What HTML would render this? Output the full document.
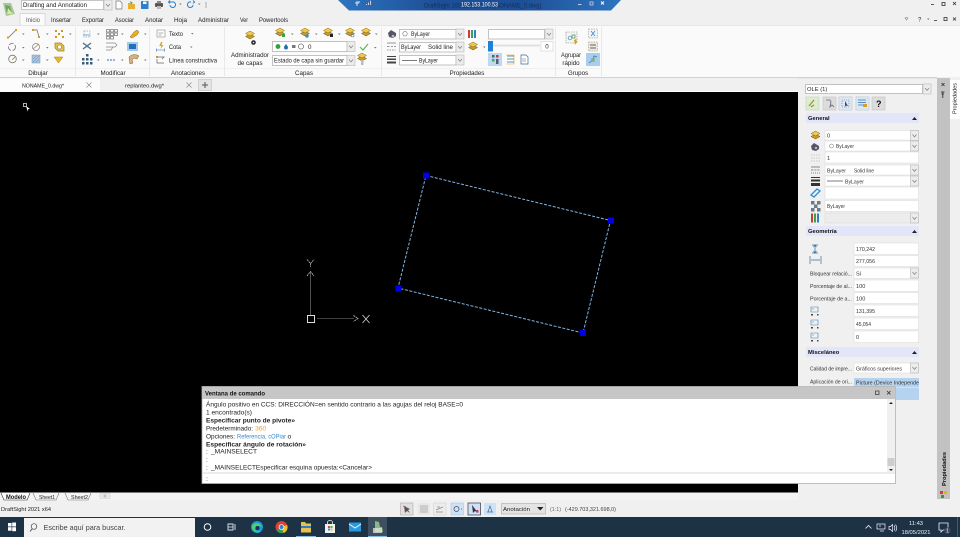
<!DOCTYPE html>
<html lang="es"><head><meta charset="utf-8"><title>DraftSight</title>
<style>
html,body{margin:0;padding:0;background:#000;overflow:hidden;width:960px;height:537px}
svg{display:block;position:absolute;left:0;top:0;filter:blur(.28px)}
text{font-family:"Liberation Sans",sans-serif;font-size:6.2px;fill:#222}
.b{font-weight:bold;fill:#111}
.c{text-anchor:middle}
.cmd{font-size:6.8px;fill:#222}
.p{font-size:5.6px;fill:#333}
.box{fill:#fff;stroke:#b4b4b4;stroke-width:.8}
.t{fill:#eee}
</style></head><body>
<svg width="960" height="537" viewBox="0 0 960 537" xmlns="http://www.w3.org/2000/svg">
<defs>
<g id="chev"><rect x="0" y="0" width="8" height="10" fill="#ececec" stroke="#b8b8b8" stroke-width=".6"/><path d="M2 4l2 2.4L6 4" fill="none" stroke="#888" stroke-width=".8"/></g>
<path id="dd" d="M0 0h2.6L1.3 1.5z" fill="#777"/>
<g id="layer"><path d="M-4.500 1.500l4.500-2.500 4.500 2.500-4.500 2.500z" fill="#c89a28" stroke="#6a5410" stroke-width=".5"/><path d="M-4.500-1.500l4.500-2.500 4.500 2.500-4.500 2.500z" fill="#eec850" stroke="#8a6c10" stroke-width=".5"/></g>
<g id="rowi"><rect x="0" y="0" width="13" height="13" fill="#dcdcdc" stroke="#c4c4c4" stroke-width=".6"/></g>
</defs>

<!-- base -->
<rect width="960" height="537" fill="#f0f0f0"/>
<!-- title / tabs -->
<rect y="0" width="960" height="25" fill="#f0f0f0"/>
<path d="M3 3l8 0 4 11-9 2z" fill="#a8c890"/><path d="M5 5l5 1 2 7-5 1z" fill="#6aa36a"/><path d="M8 8l5 6H7z" fill="#dce4a8"/>
<rect x="21.500" y=".5" width="82" height="9" fill="#fff" stroke="#b0b0b0" stroke-width=".7"/>
<text x="23" y="7" style="font-size:6.3px" textLength="64" lengthAdjust="spacingAndGlyphs">Drafting and Annotation</text>
<use href="#chev" x="104" y="0"/>
<!-- quick access -->
<path d="M116 1h4l2 2v6h-6z" fill="#fff" stroke="#777" stroke-width=".7"/>
<path d="M128 3h3l1 1h3v5h-7z" fill="#e8b030"/><path d="M130 1l3 2-2 1z" fill="#40a040"/>
<rect x="141" y="1" width="7.500" height="8" rx=".8" fill="#2c80d0"/><rect x="143" y="1.500" width="3.500" height="2.500" fill="#fff"/>
<rect x="155" y="3" width="8" height="4" rx="1" fill="#555"/><rect x="157" y="1" width="4" height="2.500" fill="#888"/><rect x="157" y="6" width="4" height="3" fill="#bbb"/>
<path d="M170 5a2.800 2.800 0 1 0 2-3h-3M170 .5l-1.500 1.500 1.500 1.500" fill="none" stroke="#2c80d0" stroke-width="1"/>
<use href="#dd" x="179" y="3.500"/>
<path d="M193 5a2.800 2.800 0 1 1-2-3h-1M193 .5l1.500 1.500-1.500 1.500" fill="none" stroke="#2c80d0" stroke-width="1"/>
<use href="#dd" x="198" y="3.500"/>
<path d="M205 3h2M205 5h2M205 7h2" stroke="#666" stroke-width=".6"/>

<!-- tab strip -->
<path d="M20 25V13.500h25V25" fill="#fafafa" stroke="#d0d0d0" stroke-width=".7"/>
<text x="26" y="22" style="font-size:6.200px;fill:#555" textLength="14" lengthAdjust="spacingAndGlyphs">Inicio</text>
<text x="51" y="22" textLength="20" lengthAdjust="spacingAndGlyphs">Insertar</text>
<text x="82" y="22" textLength="22" lengthAdjust="spacingAndGlyphs">Exportar</text>
<text x="115" y="22" textLength="19" lengthAdjust="spacingAndGlyphs">Asociar</text>
<text x="145" y="22" textLength="18" lengthAdjust="spacingAndGlyphs">Anotar</text>
<text x="174" y="22" textLength="13" lengthAdjust="spacingAndGlyphs">Hoja</text>
<text x="198" y="22" textLength="31" lengthAdjust="spacingAndGlyphs">Administrar</text>
<text x="240" y="22" textLength="8" lengthAdjust="spacingAndGlyphs">Ver</text>
<text x="259" y="22" textLength="29" lengthAdjust="spacingAndGlyphs">Powertools</text>

<!-- window controls -->
<g fill="none" stroke="#333" stroke-width=".8">
<path d="M931 4.500h3"/><rect x="942" y="2.500" width="3" height="3"/><path d="M953 2l3 3M956 2l-3 3"/>
<path d="M934 20.500h3"/><rect x="944" y="17.500" width="3" height="3"/><path d="M953 17.500l3 3M956 17.500l-3 3"/>
<path d="M905 18l1.500 2 1.500-2-1.500-.6z" stroke="#999"/>
</g>
<text x="918" y="21.500" style="font-size:6px">?</text>
<use href="#dd" x="927" y="18.500"/>

<!-- ribbon -->
<rect y="25" width="960" height="52" fill="#fafafa"/>
<rect y="25" width="960" height=".7" fill="#dedede"/>
<rect y="68" width="601" height=".7" fill="#ececec"/>
<g fill="#e2e2e2"><rect x="75" y="27" width=".7" height="49"/><rect x="149" y="27" width=".7" height="49"/><rect x="224" y="27" width=".7" height="49"/><rect x="381" y="27" width=".7" height="49"/><rect x="555" y="27" width=".7" height="49"/><rect x="601" y="27" width=".7" height="49"/></g>
<text class="c" x="38" y="75">Dibujar</text>
<text class="c" x="113" y="75">Modificar</text>
<text class="c" x="188" y="75">Anotaciones</text>
<text class="c" x="304" y="75">Capas</text>
<text class="c" x="467" y="75">Propiedades</text>
<text class="c" x="578" y="75">Grupos</text>

<!-- Dibujar icons -->
<path d="M8 38l8-8" stroke="#888" stroke-width=".9"/><rect x="7" y="36.500" width="2" height="2" fill="#d8a020"/><rect x="15" y="29" width="2" height="2" fill="#d8a020"/>
<path d="M33 30h4l2 7" fill="none" stroke="#888" stroke-width=".9"/><rect x="32" y="29" width="2" height="2" fill="#d8a020"/><rect x="38" y="36" width="2" height="2" fill="#d8a020"/>
<g fill="#c89820"><rect x="55" y="30" width="2" height="2"/><rect x="61" y="30" width="2" height="2"/><rect x="58" y="33" width="2" height="2"/><rect x="55" y="36" width="2" height="2"/><rect x="62" y="36" width="2" height="2"/></g>
<circle cx="12" cy="47" r="3.500" fill="none" stroke="#777" stroke-width=".8" stroke-dasharray="5 1.500"/>
<circle cx="36" cy="47" r="3.500" fill="none" stroke="#888" stroke-width=".8"/><path d="M33 49l6-5" stroke="#b07850" stroke-width=".7"/>
<path d="M55 43h6l3 3v5h-6l-3-3z" fill="#e8c040" stroke="#a08020" stroke-width=".7"/><circle cx="59.500" cy="47" r="2" fill="#fafafa" stroke="#777" stroke-width=".6"/>
<circle cx="12.500" cy="59" r="3.800" fill="none" stroke="#777" stroke-width=".8"/><path d="M12 60l3-3" stroke="#c89820" stroke-width="1"/>
<rect x="32" y="55" width="8" height="8" fill="#a8c4e0" stroke="#7090b0" stroke-width=".5"/><path d="M33 62l6-6M33 59l3-3M36 62l3-3" stroke="#6888a8" stroke-width=".5"/>
<path d="M54 57h9l-4.500 6z" fill="#e8b820" stroke="#a08020" stroke-width=".5"/>
<g><use href="#dd" x="22" y="33.500"/><use href="#dd" x="46" y="33.500"/><use href="#dd" x="69" y="33.500"/><use href="#dd" x="22" y="47"/><use href="#dd" x="46" y="47"/><use href="#dd" x="22" y="59.500"/><use href="#dd" x="46" y="59.500"/></g>

<!-- Modificar icons -->
<rect x="84" y="31" width="6" height="6" fill="none" stroke="#88a8c8" stroke-width=".7" stroke-dasharray="1.500 1"/><path d="M83 35h7" stroke="#4080c0" stroke-width=".7"/>
<g fill="none" stroke="#777" stroke-width=".7"><rect x="106.500" y="29.500" width="3" height="2.500"/><rect x="110.500" y="29.500" width="3" height="2.500"/><rect x="114.500" y="29.500" width="3" height="2.500"/><rect x="106.500" y="33" width="3" height="2.500"/><rect x="110.500" y="33" width="3" height="2.500"/><rect x="114.500" y="33" width="3" height="2.500"/><rect x="106.500" y="36.500" width="3" height="2.500"/><rect x="110.500" y="36.500" width="3" height="2.500"/></g>
<path d="M130 37l4-5 3-2 2 2-2 3-5 3z" fill="#e8b020" stroke="#906810" stroke-width=".5"/>
<path d="M83 43l8 6M91 43l-8 6" stroke="#5a6a78" stroke-width="1.300"/><circle cx="87" cy="46" r="1.300" fill="#4080c0"/>
<path d="M106 43h9l2 2-2 2h-9M106 47h7l-2 3h-5" fill="none" stroke="#888" stroke-width=".7"/>
<rect x="127" y="42" width="11" height="9" fill="#a8c8e8"/><rect x="129" y="44" width="7" height="5" fill="#2070c0"/>
<g fill="#3a5a78"><rect x="86" y="54" width="2.500" height="2.500"/><rect x="82" y="58" width="2.500" height="2.500"/><rect x="86" y="58" width="2.500" height="2.500"/><rect x="90" y="58" width="2.500" height="2.500"/><rect x="82" y="62" width="2.500" height="2.500"/><rect x="86" y="62" width="2.500" height="2.500"/><rect x="90" y="62" width="2.500" height="2.500"/></g>
<path d="M107 60h8" stroke="#3070c0" stroke-width=".9" stroke-dasharray="2 1"/>
<path d="M129 57c3-3 7-3 10-1l-2 3-3-1-2 2 1 3-3 1z" fill="#d8b080" stroke="#806020" stroke-width=".5"/>
<g><use href="#dd" x="97" y="33.500"/><use href="#dd" x="121" y="33.500"/><use href="#dd" x="144" y="33.500"/><use href="#dd" x="97" y="59.500"/><use href="#dd" x="121" y="59.500"/><use href="#dd" x="144" y="59.500"/></g>

<!-- Anotaciones -->
<rect x="157" y="30" width="8" height="7" fill="#fff" stroke="#888" stroke-width=".6"/><path d="M158.500 33h5M158.500 35h3" stroke="#666" stroke-width=".5"/>
<text x="169" y="36" textLength="14" lengthAdjust="spacingAndGlyphs">Texto</text><use href="#dd" x="191" y="33"/>
<path d="M161 42l1.500 0-1 3h2l-3 4 .7-3h-2z" fill="#e0a820"/><path d="M156.500 50h8M156.500 48.500v3M164.500 48.500v3" stroke="#3070b0" stroke-width=".6"/>
<text x="169" y="49" textLength="12" lengthAdjust="spacingAndGlyphs">Cota</text><use href="#dd" x="190" y="46.500"/>
<path d="M157 57h7l-2 2M157 59v4h7" fill="none" stroke="#666" stroke-width=".7"/><rect x="156" y="56" width="2" height="2" fill="#c89820"/>
<text x="169" y="62.500" textLength="48" lengthAdjust="spacingAndGlyphs">Línea constructiva</text>

<!-- Capas -->
<use href="#layer" x="250" y="35"/>
<circle cx="253.500" cy="42.500" r="2.300" fill="#222"/><circle cx="253.500" cy="42.500" r=".8" fill="#eee"/>
<text class="c" x="250" y="57" textLength="38" lengthAdjust="spacingAndGlyphs">Administrador</text>
<text class="c" x="250" y="65">de capas</text>
<g><use href="#layer" x="280" y="32"/><use href="#layer" x="305" y="32"/><use href="#layer" x="328" y="32"/><use href="#layer" x="350" y="32"/><use href="#layer" x="366" y="32"/></g>
<rect x="282" y="34" width="3" height="3" fill="#40a040"/><circle cx="307" cy="36" r="1.700" fill="#3090d0"/><rect x="330" y="34" width="3" height="3" fill="#222"/><circle cx="352.500" cy="35.500" r="1.500" fill="none" stroke="#4080c0" stroke-width=".6"/>
<g><use href="#dd" x="291" y="33.500"/><use href="#dd" x="315" y="33.500"/><use href="#dd" x="338" y="33.500"/><use href="#dd" x="375" y="33.500"/><use href="#dd" x="374" y="47"/></g>
<rect class="box" x="272.500" y="41.500" width="74.500" height="10"/>
<circle cx="278" cy="46.500" r="2.400" fill="#30a040"/><path d="M286 44c1.500 2 2 2.500 2 3.500a2 2 0 0 1-4 0c0-1 .5-1.500 2-3.500z" fill="#1f70b0"/><rect x="292" y="45" width="3.500" height="3" fill="#777"/><circle cx="301" cy="46.500" r="2.600" fill="#fff" stroke="#555" stroke-width=".6"/><text x="308" y="49">0</text>
<use href="#chev" x="347" y="41.500"/>
<rect class="box" x="272.500" y="55.500" width="74.500" height="10"/>
<text x="274" y="62.500" textLength="70" lengthAdjust="spacingAndGlyphs">Estado de capa sin guardar</text>
<use href="#chev" x="347" y="55.500"/>
<path d="M360 47l3 3 5-6" fill="none" stroke="#60b850" stroke-width="1.200"/>
<use href="#layer" x="362" y="57"/><rect x="361" y="60" width="2.500" height="5" fill="#bbb"/>

<!-- Propiedades -->
<path d="M388 33l3-3 5 3v3l-3 2-4-1z" fill="#556"/><circle cx="393" cy="36" r="1.300" fill="#bbb"/>
<g fill="none" stroke="#777" stroke-width=".7"><path d="M387 43h9M387 46.500h2.500m1.500 0h2m1 0h2M387 50h1.500m1 0h1.500m1 0h1.500m1 0h1"/></g>
<g fill="#444"><rect x="387" y="56" width="9" height="1"/><rect x="387" y="58.500" width="9" height="1.500"/><rect x="387" y="61.500" width="9" height="2"/></g>
<rect class="box" x="399.500" y="29.500" width="56.500" height="9.500"/>
<circle cx="405" cy="33.800" r="2.200" fill="#fff" stroke="#777" stroke-width=".6"/>
<text x="411" y="36.200" textLength="19" lengthAdjust="spacingAndGlyphs">ByLayer</text><use href="#chev" x="456" y="29"/>
<rect class="box" x="399.500" y="42.500" width="56.500" height="9.500"/>
<text x="401" y="49.200" textLength="20" lengthAdjust="spacingAndGlyphs">ByLayer</text><text x="428" y="49.200" textLength="25" lengthAdjust="spacingAndGlyphs">Solid line</text><use href="#chev" x="456" y="42"/>
<rect class="box" x="399.500" y="55.500" width="56.500" height="9.500"/>
<path d="M402 60.500h15" stroke="#444" stroke-width=".7"/><text x="419" y="62.400" textLength="19" lengthAdjust="spacingAndGlyphs">ByLayer</text><use href="#chev" x="456" y="55"/>
<rect x="468" y="30" width="2" height="8" fill="#c84030"/><rect x="471" y="30" width="2" height="8" fill="#40a050"/><rect x="474" y="30" width="2" height="8" fill="#3080c8"/>
<use href="#layer" x="473" y="46"/><use href="#dd" x="483" y="46.500"/>
<rect class="box" x="488.500" y="29.500" width="56" height="9.500"/><use href="#chev" x="545" y="29"/>
<rect x="488" y="44.500" width="52" height="2" fill="#e0e0e0"/>
<rect x="488" y="41" width="5" height="10.500" fill="#1f80d8"/>
<rect class="box" x="541" y="41.500" width="12" height="9.500" style="stroke:#ddd"/><text class="c" x="547" y="48.500">0</text>
<rect x="488" y="53" width="14" height="13" fill="#bcd8f2"/>
<rect x="492" y="55" width="2.500" height="2.500" fill="#506070"/><rect x="496" y="55" width="2.500" height="2.500" fill="#c04040"/><rect x="492" y="59" width="2.500" height="2.500" fill="#50a050"/><rect x="496" y="59" width="2.500" height="5" fill="#506070"/>
<path d="M506 55h8v9h-8" fill="none" stroke="#e0a820" stroke-width=".6"/><path d="M507 56h7M507 59h7M507 62h7" stroke="#3070a0" stroke-width=".7"/>
<path d="M521 55h5l2 2v7h-7z" fill="#fff" stroke="#3a6a90" stroke-width=".7"/><path d="M522 59h4M522 61h4" stroke="#3a6a90" stroke-width=".5"/>

<!-- Grupos -->
<rect x="566" y="32" width="11" height="11" fill="#f4f4f4" stroke="#888" stroke-width=".6" stroke-dasharray="1.500 1"/><circle cx="570" cy="38" r="1.800" fill="none" stroke="#3090c0" stroke-width=".7"/><rect x="572" y="35" width="3" height="3" fill="none" stroke="#409040" stroke-width=".7"/>
<path d="M574 40l2-1 1 3-2 3z" fill="#d8a020"/>
<text class="c" x="571" y="57" textLength="20" lengthAdjust="spacingAndGlyphs">Agrupar</text>
<text class="c" x="571" y="65">rápido</text>
<rect x="588.500" y="29" width="9" height="9" fill="#eef4f8" stroke="#888" stroke-width=".5" stroke-dasharray="1.500 1"/><path d="M591 31l4 5M595 31l-4 5" stroke="#3a80c0" stroke-width=".7"/>
<rect x="588.500" y="42" width="9" height="9" fill="#f0e8d8" stroke="#888" stroke-width=".5" stroke-dasharray="1.500 1"/><path d="M590 45h6M590 48h6" stroke="#506878" stroke-width=".9"/>
<rect x="586" y="53" width="14" height="13" fill="#a8cdf0"/><path d="M589 63l4-3 1-4 3 1" fill="none" stroke="#4a8aa0" stroke-width="1"/><rect x="591" y="58" width="4" height="4" fill="#80b080" opacity=".7"/>

<!-- doc tabs -->
<rect y="77" width="800" height="1.300" fill="#d2d2d2"/>
<rect y="78" width="800" height="14" fill="#f0f0f0"/>
<rect y="91" width="800" height="1" fill="#fcfcfc"/>
<rect x="0" y="78.300" width="100" height="14" fill="#fcfcfc"/>
<text x="22" y="87.500" style="font-size:5.500px" textLength="42" lengthAdjust="spacingAndGlyphs">NONAME_0.dwg*</text>
<text x="125" y="87.500" style="font-size:5.500px" textLength="39" lengthAdjust="spacingAndGlyphs">replanteo.dwg*</text>
<path d="M86.500 82.500l5 5M91.500 82.500l-5 5M186.500 82.500l5 5M191.500 82.500l-5 5" stroke="#888" stroke-width=".7"/>
<rect x="198.500" y="79.500" width="13" height="11" fill="#e4e4e4" stroke="#c8c8c8" stroke-width=".7"/><path d="M205 82v6M202 85h6" stroke="#555" stroke-width="1"/>

<!-- canvas -->
<rect x="0" y="92" width="798" height="400.500" fill="#000"/>
<rect x="23.500" y="103.500" width="3" height="3" fill="none" stroke="#ddd" stroke-width=".8"/><path d="M26 106l4 3-2 .2-.2 2.500z" fill="#fff"/>
<!-- selected rect -->
<path d="M426 175.500L610.500 220.500L583 333L398 288Z" fill="none" stroke="#7fb4e4" stroke-width="1" stroke-dasharray="3 1.500"/>
<g fill="#0000e6"><rect x="423" y="172.500" width="6" height="6"/><rect x="608" y="217.500" width="6" height="6"/><rect x="580" y="330" width="6" height="6"/><rect x="395.500" y="285.500" width="6" height="6"/></g>
<!-- UCS -->
<path d="M310.500 315V272" stroke="#666" stroke-width=".8"/>
<path d="M317 318.500H354" stroke="#555" stroke-width=".8"/>
<rect x="307.500" y="315.500" width="7" height="7" fill="none" stroke="#ddd" stroke-width="1"/>
<path d="M307 276l3.500-4.500 3.500 4.500" fill="none" stroke="#bbb" stroke-width=".8" stroke-dasharray="2 .6"/>
<path d="M307 259.500l3.500 4 3.500-4M310.500 263.500v3.500" fill="none" stroke="#bbb" stroke-width=".8" stroke-dasharray="2 .6"/>
<path d="M353.500 315.500l4.500 3-4.500 3" fill="none" stroke="#bbb" stroke-width=".8" stroke-dasharray="2 .6"/>
<path d="M362.500 315l7 8M369.500 315l-7 8" stroke="#ccc" stroke-width=".9"/>

<!-- right panel -->
<rect x="798" y="78" width="162" height="439" fill="#f0f0f0"/>
<rect x="798" y="77" width="139" height="1.300" fill="#d2d2d2"/>
<rect x="937" y="78" width="13" height="421" fill="#c2c2c2"/>
<rect x="950" y="80" width="10" height="39" fill="#fff"/>
<path d="M941.500 83l3 3M944.500 83l-3 3" stroke="#333" stroke-width=".8"/>
<path d="M941 92h3.500M942.750 92v6M941.500 94h2.500" stroke="#444" stroke-width="1"/>
<text transform="translate(956.500,114) rotate(-90)" style="font-size:5.800px" textLength="31" lengthAdjust="spacingAndGlyphs">Propiedades</text>
<text class="b" transform="translate(946,486) rotate(-90)" style="font-size:5.800px" textLength="34" lengthAdjust="spacingAndGlyphs">Propiedades</text>
<rect x="940" y="491" width="3" height="3" fill="#d04030"/><rect x="944" y="491" width="3" height="3" fill="#e0b020"/><rect x="941" y="495" width="3" height="3" fill="#409040"/>

<rect class="box" x="805.500" y="84.500" width="117" height="9"/><text x="807" y="91.200" style="font-size:5.800px">OLE (1)</text><use href="#chev" x="923" y="84"/>
<rect x="806" y="97" width="13" height="13" fill="#dcecd0" stroke="#c4d4b8" stroke-width=".6"/>
<path d="M809 106l5-6M811 107l3-2" stroke="#a09030" stroke-width="1.200"/>
<use href="#rowi" x="823" y="97"/><use href="#rowi" x="839" y="97"/><use href="#rowi" x="856" y="97"/><use href="#rowi" x="872" y="97"/>
<rect x="839" y="97" width="13" height="13" fill="#dbe8f4" stroke="#c0d0e0" stroke-width=".6"/>
<rect x="856" y="97" width="13" height="13" fill="#dbe8f4" stroke="#c0d0e0" stroke-width=".6"/>
<path d="M826 100h4l1 2-1 5 2-2 2 2" fill="none" stroke="#667" stroke-width=".8"/>
<rect x="842" y="100" width="7" height="7" fill="none" stroke="#668" stroke-width=".6" stroke-dasharray="1 1"/><path d="M845 101l3 5-2-.5-1 1.500z" fill="#445"/>
<path d="M858 100h8M858 102.500h8M858 105h5" stroke="#3070b0" stroke-width=".7"/><rect x="863" y="104" width="4" height="3" fill="#d8a020"/>
<text x="876" y="107" class="b" style="font-size:9px">?</text>

<!-- General -->
<rect x="806" y="113" width="113" height="10" fill="#e2e6f8"/>
<text x="808" y="120" class="b" style="font-size:5.800px">General</text>
<path d="M912 120l2.500-3 2.500 3z" fill="#222"/>
<rect x="806" y="226" width="113" height="10" fill="#e2e6f8"/>
<text x="808" y="233" class="b" style="font-size:5.800px">Geometría</text>
<path d="M912 233l2.500-3 2.500 3z" fill="#222"/>
<rect x="806" y="347" width="113" height="10" fill="#e2e6f8"/>
<text x="808" y="354" class="b" style="font-size:5.800px">Misceláneo</text>
<path d="M912 354l2.500-3 2.500 3z" fill="#222"/>

<g stroke="#d8d8d8" stroke-width=".5" fill="#fff">
<rect x="825" y="130.500" width="93.500" height="9.500"/><rect x="825" y="141" width="93.500" height="10"/><rect x="825" y="152" width="93.500" height="11"/><rect x="825" y="165" width="93.500" height="10"/><rect x="825" y="176" width="93.500" height="10"/><rect x="825" y="187" width="93.500" height="12"/><rect x="825" y="200.500" width="93.500" height="11"/>
<rect x="825" y="213" width="93.500" height="10" fill="#ececec"/>
<rect x="854" y="243" width="64.500" height="11.500"/><rect x="854" y="255.500" width="64.500" height="11"/><rect x="854" y="268" width="64.500" height="10.500"/><rect x="854" y="280" width="64.500" height="11.500"/><rect x="854" y="292.500" width="64.500" height="11"/><rect x="854" y="305" width="64.500" height="11.500"/><rect x="854" y="318" width="64.500" height="11.500"/><rect x="854" y="331" width="64.500" height="11.500"/>
<rect x="854" y="363" width="64.500" height="10"/>
</g>
<use href="#chev" x="910.500" y="130.500"/><use href="#chev" x="910.500" y="141"/><use href="#chev" x="910.500" y="165"/><use href="#chev" x="910.500" y="176"/><use href="#chev" x="910.500" y="213"/><use href="#chev" x="910.500" y="268"/><use href="#chev" x="910.500" y="363"/>
<text class="p" x="827" y="137.500">0</text>
<circle cx="831.500" cy="146" r="2" fill="#fff" stroke="#777" stroke-width=".5"/><text class="p" x="836" y="148" textLength="18" lengthAdjust="spacingAndGlyphs">ByLayer</text>
<text class="p" x="827" y="160">1</text>
<text class="p" x="827" y="172.500" textLength="19" lengthAdjust="spacingAndGlyphs">ByLayer</text><text class="p" x="854" y="172.500" textLength="20" lengthAdjust="spacingAndGlyphs">Solid line</text>
<path d="M827 181h16" stroke="#444" stroke-width=".7"/><text class="p" x="845" y="183.300" textLength="19" lengthAdjust="spacingAndGlyphs">ByLayer</text>
<text class="p" x="827" y="208" textLength="18" lengthAdjust="spacingAndGlyphs">ByLayer</text>
<!-- general icons -->
<use href="#layer" x="815.500" y="135"/>
<path d="M811 146l3-3 5 3v3l-3 2-4-1z" fill="#556"/><circle cx="816" cy="148" r="1.200" fill="#bbb"/>
<g stroke="#ccc" stroke-width=".9"><path d="M811 155h9M811 158h9M811 161h9" stroke-dasharray="1.500 1"/></g>
<g stroke="#666" stroke-width=".7"><path d="M811 167h9M811 170h2.500m1 0h2m1 0h2M811 173h1m1 0h1m1 0h1m1 0h1m1 0h1"/></g>
<g fill="#333"><rect x="811" y="177" width="9" height="1"/><rect x="811" y="179.500" width="9" height="2"/><rect x="811" y="183" width="9" height="3"/></g>
<path d="M811 195l6-6 3 2-6 6z" fill="none" stroke="#2c90d0" stroke-width="1.300"/>
<g fill="#6a7a88"><rect x="811" y="201" width="3.500" height="3.500"/><rect x="817" y="201" width="3.500" height="3.500"/><rect x="814" y="204.500" width="3.500" height="3.500"/><rect x="811" y="208" width="3.500" height="3.500"/><rect x="817" y="208" width="3.500" height="3.500"/></g>
<rect x="811" y="213.500" width="2" height="9" fill="#c84030"/><rect x="814" y="213.500" width="2" height="9" fill="#40a050"/><rect x="817" y="213.500" width="2" height="9" fill="#3080c8"/>
<!-- geometry -->
<path d="M812 245h6M812 253h6M815 245v8M813.500 247l1.500-2 1.500 2M813.500 251l1.500 2 1.500-2" fill="none" stroke="#3070a0" stroke-width=".7"/>
<path d="M810 256v8M821 256v8M811 260h9" fill="none" stroke="#3070a0" stroke-width=".7"/>
<text class="p" x="856" y="251" textLength="19" lengthAdjust="spacingAndGlyphs">170,242</text>
<text class="p" x="856" y="263" textLength="19" lengthAdjust="spacingAndGlyphs">277,056</text>
<text class="p" x="810" y="275.500" textLength="42" lengthAdjust="spacingAndGlyphs">Bloquear relació...</text><text class="p" x="856" y="275.500">Sí</text>
<text class="p" x="810" y="288" textLength="42" lengthAdjust="spacingAndGlyphs">Porcentaje de al...</text><text class="p" x="856" y="288">100</text>
<text class="p" x="810" y="300.500" textLength="42" lengthAdjust="spacingAndGlyphs">Porcentaje de a...</text><text class="p" x="856" y="300.500">100</text>
<text class="p" x="856" y="313" textLength="19" lengthAdjust="spacingAndGlyphs">131,395</text>
<text class="p" x="856" y="326" textLength="15" lengthAdjust="spacingAndGlyphs">45,054</text>
<text class="p" x="856" y="339">0</text>
<g fill="none" stroke="#4080b0" stroke-width=".6"><path d="M811 307h7v5h-7zM812 309h2M811 320h7v5h-7zM812 322h2M811 333h7v5h-7zM812 335h2"/></g>
<g fill="#444"><rect x="811" y="314" width="2" height="1.500"/><rect x="817" y="314" width="1.500" height="1.500"/><rect x="811" y="327" width="2" height="1.500"/><rect x="817" y="327" width="1.500" height="1.500"/><rect x="811" y="340" width="2" height="1.500"/><rect x="817" y="340" width="1.500" height="1.500"/></g>
<!-- misc -->
<text class="p" x="810" y="370.500" textLength="42" lengthAdjust="spacingAndGlyphs">Calidad de impre...</text>
<text class="p" x="856" y="370.500" textLength="46" lengthAdjust="spacingAndGlyphs">Gráficos superiores</text>
<text class="p" x="810" y="383.500" textLength="42" lengthAdjust="spacingAndGlyphs">Aplicación de ori...</text>
<rect x="854" y="378" width="65" height="9.500" fill="#b5d3ee"/>
<rect x="854" y="388" width="65" height="12" fill="#b5d3ee"/>
<text class="p" x="856" y="384.500" textLength="63" lengthAdjust="spacingAndGlyphs">Picture (Device Independe</text>

<!-- Command window -->
<rect x="202" y="386.500" width="693.500" height="97" fill="#fff" stroke="#b0b0b0" stroke-width=".8"/>
<rect x="202.500" y="387" width="693" height="12" fill="#c6c6c6"/>
<text x="205" y="395.500" class="b" style="font-size:6px" textLength="60" lengthAdjust="spacingAndGlyphs">Ventana de comando</text>
<rect x="875.500" y="391" width="3.500" height="3.500" fill="none" stroke="#333" stroke-width=".7"/>
<path d="M887 391l3.500 3.500M890.500 391l-3.500 3.500" stroke="#333" stroke-width=".8"/>
<rect x="887" y="399" width="8" height="73" fill="#f0f0f0"/>
<path d="M889 404l2-2 2 2z" fill="#222"/><path d="M889 469l2 2 2-2z" fill="#222"/>
<rect x="887.500" y="458" width="7" height="8" fill="#cdcdcd"/>
<rect x="202" y="472.500" width="693" height="1" fill="#d8d8d8"/>
<text class="cmd" x="206" y="406.500" textLength="257" lengthAdjust="spacingAndGlyphs">Ángulo positivo en CCS: DIRECCIÓN=en sentido contrario a las agujas del reloj BASE=0</text>
<text class="cmd" x="206" y="414.500" textLength="46" lengthAdjust="spacingAndGlyphs">1 encontrado(s)</text>
<text class="cmd b" x="206" y="422.500" textLength="89" lengthAdjust="spacingAndGlyphs">Especificar punto de pivote»</text>
<text class="cmd" x="206" y="430.500" textLength="47" lengthAdjust="spacingAndGlyphs">Predeterminado:</text><text class="cmd" x="255" y="430.500" style="fill:#e8a040">360</text>
<text class="cmd" x="206" y="438.500" textLength="29" lengthAdjust="spacingAndGlyphs">Opciones:</text><text class="cmd" x="237" y="438.500" style="fill:#3a88d0" textLength="49" lengthAdjust="spacingAndGlyphs">Referencia, cOPiar</text><text class="cmd" x="287.500" y="438.500">o</text>
<text class="cmd b" x="206" y="446.500" textLength="100" lengthAdjust="spacingAndGlyphs">Especificar ángulo de rotación»</text>
<text class="cmd" x="206" y="453.500">:</text><text class="cmd" x="211" y="453.500" textLength="46" lengthAdjust="spacingAndGlyphs">_MAINSELECT</text>
<text class="cmd" x="206" y="461.500">:</text>
<text class="cmd" x="206" y="469.500">:</text><text class="cmd" x="211" y="469.500" textLength="161" lengthAdjust="spacingAndGlyphs">_MAINSELECTEspecificar esquina opuesta:&lt;Cancelar&gt;</text>
<text class="cmd" x="206" y="481">:</text>

<!-- bottom bars -->
<rect x="0" y="492.500" width="798" height="8" fill="#f4f4f4"/>
<rect x="0" y="500" width="960" height="17" fill="#f0f0f0"/>
<path d="M1 493l3 7h23l3-7" fill="#fff" stroke="#333" stroke-width=".6"/>
<text class="b" x="6" y="498.800" style="font-size:6px" textLength="20" lengthAdjust="spacingAndGlyphs">Modelo</text>
<path d="M33 493l3 7h20l3-7M65 493l3 7h20l3-7" fill="none" stroke="#777" stroke-width=".6"/>
<text x="39" y="498.800" style="font-size:5.600px" textLength="16" lengthAdjust="spacingAndGlyphs">Sheet1</text>
<text x="71" y="498.800" style="font-size:5.600px" textLength="17" lengthAdjust="spacingAndGlyphs">Sheet2</text>
<rect x="100" y="493.500" width="10" height="5" fill="#e8e8e8" stroke="#ccc" stroke-width=".5"/><path d="M105 494.500v3M103 496h4" stroke="#999" stroke-width=".6"/>
<text x="1" y="511" style="font-size:5.800px" textLength="50" lengthAdjust="spacingAndGlyphs">DraftSight 2021 x64</text>

<!-- status -->
<rect x="400.500" y="503" width="12.500" height="12" fill="#e0e0e0" stroke="#aaa" stroke-width=".6"/><path d="M404 506l1 7 2-2 3 2-2-3 2-1z" fill="#556"/><path d="M403 506l3 1" stroke="#c04040" stroke-width=".8"/>
<rect x="417.500" y="503" width="12.500" height="12" fill="#e8e8e8"/><path d="M420 506h8M420 508h8M420 510h8M420 512h8" stroke="#777" stroke-width=".6"/>
<rect x="433.500" y="503" width="12.500" height="12" fill="#ececec" stroke="#ccc" stroke-width=".5"/><path d="M436 510l7-3M436 512h7M437 507h3" stroke="#888" stroke-width=".7"/>
<rect x="451" y="503" width="12.500" height="12" fill="#cfe2f4" stroke="#9cc0e0" stroke-width=".5"/><circle cx="456.500" cy="509" r="2.500" fill="none" stroke="#446" stroke-width=".7"/><path d="M461 509h1" stroke="#446" stroke-width=".7"/>
<rect x="468" y="503" width="12.500" height="12" fill="#cfe2f4" stroke="#303848" stroke-width=".7"/><path d="M472 505l1 8 2-2 3 2z" fill="#334"/><rect x="476" y="510" width="2.500" height="2.500" fill="#c04060"/>
<rect x="484" y="503" width="12" height="12" fill="#cfe2f4"/><path d="M487 512h6M490 506l-2 6h4z" fill="none" stroke="#3a70a0" stroke-width=".7"/>
<rect x="501.500" y="503.500" width="44" height="10.500" fill="#e4e4e4" stroke="#aaa" stroke-width=".6"/>
<text x="503" y="511" style="font-size:5.800px" textLength="27" lengthAdjust="spacingAndGlyphs">Anotación</text>
<path d="M537 507h6.500l-3.250 3.500z" fill="#222"/>
<text x="550" y="511" style="font-size:5.800px;fill:#666" textLength="11" lengthAdjust="spacingAndGlyphs">(1:1)</text>
<text x="565" y="511" style="font-size:5.800px;fill:#444" textLength="51" lengthAdjust="spacingAndGlyphs">(-429.703,321.698,0)</text>

<!-- Remote bar -->
<defs><linearGradient id="rb" x1="0" y1="0" x2="1" y2="0"><stop offset="0" stop-color="#2f74c0"/><stop offset=".35" stop-color="#1d4f96"/><stop offset=".65" stop-color="#1d4f96"/><stop offset="1" stop-color="#2f74c0"/></linearGradient></defs>
<path d="M338 0H621L611 10.500H349Z" fill="url(#rb)"/>
<text x="424" y="7.500" style="font-size:6.500px;fill:#16305c" textLength="117" lengthAdjust="spacingAndGlyphs">DraftSight 192.153.100.53 [NONAME_0.dwg]</text>
<text x="461" y="6.500" style="font-size:6.200px;fill:#fff" textLength="37" lengthAdjust="spacingAndGlyphs">192.153.100.53</text>
<path d="M355 3h4M357 1v5M359 3v-2" stroke="#fff" stroke-width=".8" fill="none"/>
<path d="M366 5h1v-1h-1zM368 5h1V2.500h-1zM370 5h1V.8h-1z" fill="#ccd"/>
<path d="M578 4.500h3.500" stroke="#dde" stroke-width=".9"/><rect x="590" y="2" width="3" height="3" fill="none" stroke="#dde" stroke-width=".7"/><path d="M601 1.500l3 3M604 1.500l-3 3" stroke="#fff" stroke-width=".9"/>

<!-- Taskbar -->
<rect x="0" y="517" width="960" height="20" fill="#1e3245"/>
<g fill="#fff"><rect x="8" y="523" width="3.600" height="3.500"/><rect x="12.200" y="522.500" width="3.800" height="4"/><rect x="8" y="527.200" width="3.600" height="3.500"/><rect x="12.200" y="527.200" width="3.800" height="4"/></g>
<rect x="24" y="518" width="171" height="19" fill="#f2f2f2"/>
<circle cx="34" cy="526.500" r="2.800" fill="none" stroke="#444" stroke-width=".7"/><path d="M32 529l-2 2.500" stroke="#444" stroke-width=".8"/>
<text x="43.500" y="530" style="font-size:7.300px;fill:#444" textLength="82" lengthAdjust="spacingAndGlyphs">Escribe aquí para buscar.</text>
<circle cx="207.500" cy="527" r="3.300" fill="none" stroke="#fff" stroke-width="1"/>
<path d="M228 524h5v6h-5zM235 524v6" fill="none" stroke="#dfe6ec" stroke-width=".9"/><path d="M228 527h5" stroke="#dfe6ec" stroke-width=".8"/>
<circle cx="257" cy="527" r="6" fill="#1a9ad8"/><path d="M252 526c2-4 8-4 10 1-3-2-7-1-7 2 0 2 2 3 6 2-3 3-9 1-9-5z" fill="#50d070"/><circle cx="257.500" cy="528" r="2" fill="#1e3245"/>
<circle cx="281.500" cy="527" r="6" fill="#e04030"/><path d="M281.500 527l-5.200 3a6 6 0 0 0 7 3z" fill="#30a050"/><path d="M281.500 527l5.600-2a6 6 0 0 1-3.600 8z" fill="#f0c020"/><circle cx="281.500" cy="527" r="2.800" fill="#fff"/><circle cx="281.500" cy="527" r="2.100" fill="#3080e0"/>
<path d="M301 522h4l1 1.500h5v9h-10z" fill="#e8c050"/><rect x="301" y="526" width="10" height="2" fill="#2a80c0"/><rect x="296" y="536" width="20" height="1" fill="#8ab8dc"/>
<rect x="325" y="524" width="10" height="9" fill="#eef0f2"/><path d="M327.500 524v-1.500a2.500 2 0 0 1 5 0V524" fill="none" stroke="#eee" stroke-width=".8"/><rect x="328" y="526" width="2" height="2" fill="#e04030"/><rect x="330.500" y="526" width="2" height="2" fill="#50b040"/><rect x="328" y="528.500" width="2" height="2" fill="#2a90e0"/><rect x="330.500" y="528.500" width="2" height="2" fill="#f0c020"/>
<rect x="349" y="522.500" width="12" height="9" fill="#2a9ae0"/><path d="M349 524l6 4 6-4" fill="none" stroke="#e8f4fc" stroke-width="1"/>
<rect x="368" y="517" width="19" height="20" fill="#3e5060"/>
<path d="M375 521l4 1 1 5h2l1 5h-8z" fill="#8ab880"/><rect x="373" y="528" width="9" height="5" fill="#d8e4d0" opacity=".8"/><rect x="368" y="536" width="19" height="1" fill="#8ab8dc"/>
<path d="M865.500 528.500l3-3 3 3" fill="none" stroke="#eef" stroke-width=".8"/>
<path d="M877 524h8v5h-8zM880 531h4M879 526h2" fill="none" stroke="#eef" stroke-width=".7"/>
<path d="M889 526.500h1.500l2-2v7l-2-2H889zM894 525.500c1 1.500 1 3.500 0 5M895.500 524.500c1.500 2 1.500 5 0 7" fill="none" stroke="#eef" stroke-width=".7"/>
<text class="c t" x="916" y="525" style="font-size:5.800px;fill:#eee">11:43</text>
<text class="c t" x="916" y="534" style="font-size:5.800px;fill:#eee" textLength="29" lengthAdjust="spacingAndGlyphs">18/05/2021</text>
<path d="M939 523h9v7h-5l-2 2v-2h-2z" fill="none" stroke="#eef" stroke-width=".8"/><circle cx="947.500" cy="530.500" r="3.300" fill="#3a4a5a"/><text class="c t" x="947.500" y="532.500" style="font-size:5.500px;fill:#eee">1</text>
<rect x="957" y="517" width=".7" height="20" fill="#5a6a78"/>
</svg>
</body></html>
